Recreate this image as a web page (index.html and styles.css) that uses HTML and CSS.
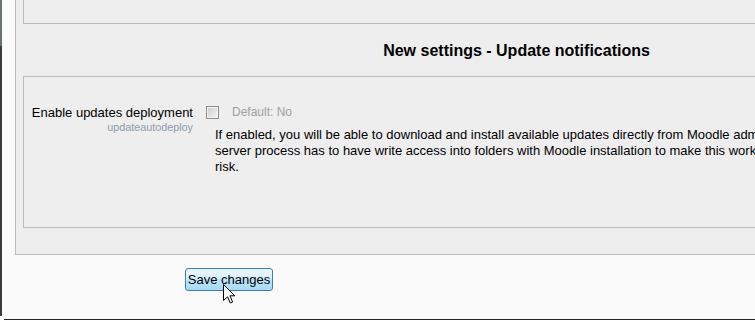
FILE: index.html
```html
<!DOCTYPE html>
<html>
<head>
<meta charset="utf-8">
<title>Update notifications</title>
<link rel="stylesheet" href="styles.css">
</head>
<body>
<div class="screen">
  <div class="main">
    <div class="edge"></div>
    <div class="page">
      <div class="outer">
        <div class="box box-prev"></div>
        <h2 class="heading">New settings - Update notifications</h2>
        <div class="box box-setting">
          <div class="row">
            <div class="label">
              <span class="title">Enable updates deployment</span>
              <span class="shortname">updateautodeploy</span>
            </div>
            <div class="setting">
              <div class="control">
                <input type="checkbox" class="check">
                <span class="default">Default: No</span>
              </div>
              <div class="desc">If enabled, you will be able to download and install available updates directly from Moodle administration page. Note that the web<br>server process has to have write access into folders with Moodle installation to make this work. That may be seen as a potential security<br>risk.</div>
            </div>
          </div>
        </div>
      </div>
      <div class="buttons">
        <button class="save" type="button">Save changes</button>
        <svg class="cursor" width="13" height="20" viewBox="0 0 13 20"><path d="M0.5 0.5 V16.5 L4.5 12.8 L7.3 19 L9.6 18 L7 11.8 H11.8 Z" fill="#fff" stroke="#000" stroke-width="1" stroke-linejoin="miter"/></svg>
      </div>
    </div>
  </div>
  <div class="taskline"></div>
</div>
</body>
</html>
```

FILE: styles.css
```css
html, body {
  margin: 0;
  padding: 0;
  width: 755px;
  height: 320px;
  overflow: hidden;
  background: #fafafa;
  font-family: "Liberation Sans", Arial, sans-serif;
  color: #000;
}

.screen {
  display: flex;
  flex-direction: column;
  width: 755px;
  height: 320px;
}

.main {
  display: flex;
  height: 319px;
  overflow: hidden;
}

.edge {
  flex: 0 0 2px;
  background: linear-gradient(#6b7370 0, #6b7370 46px, #3a3a3a 46px, #3a3a3a 316px, #fafafa 316px);
}

.page {
  padding-left: 13px;
  flex: 0 0 auto;
}

.outer {
  margin-top: -40px;
  width: 987px;
  padding: 0 7px 26px;
  border: 1px solid #bbbbbb;
  background: #eeeeee;
}

.box {
  border: 1px solid #bbbbbb;
  background: #eeeeee;
}

.box-prev {
  height: 62px;
  border-top: none;
  border-right: none;
  margin-right: -8px;
}

.heading {
  margin: 18px 0 16px;
  font-size: 16px;
  line-height: 18px;
  font-weight: bold;
  text-align: center;
}

.box-setting {
  padding-top: 27px;
  box-sizing: border-box;
  height: 152px;
  border-right: none;
  margin-right: -8px;
}

.row {
  display: flex;
}

.label {
  flex: 0 0 169px;
  display: flex;
  flex-direction: column;
  align-items: flex-end;
  text-align: right;
}

.title {
  font-size: 13px;
  line-height: 17px;
}

.shortname {
  font-size: 10.8px;
  line-height: 12px;
  color: #8b9cb0;
}

.setting {
  padding-left: 13px;
}

.control {
  display: flex;
  align-items: center;
  height: 17px;
}

.check {
  appearance: none;
  -webkit-appearance: none;
  margin: 0;
  width: 13px;
  height: 13px;
  border: 1px solid #8e8f8f;
  box-sizing: border-box;
  background: linear-gradient(135deg, #cbcbcb 0%, #e6e6e6 60%, #f6f6f6 100%);
  box-shadow: inset 0 0 0 1px #f3f3f3;
}

.default {
  margin-left: 13px;
  font-size: 12px;
  line-height: 17px;
  color: #a0a0a0;
}

.desc {
  margin-top: 6px;
  margin-left: 9px;
  font-size: 13px;
  line-height: 16px;
  white-space: nowrap;
}

.buttons {
  position: relative;
  padding: 13px 0 0 170px;
}

.save {
  width: 88px;
  height: 23px;
  margin: 0;
  padding: 0;
  border: 1px solid #3c7fb1;
  border-radius: 3px;
  background: linear-gradient(#eaf6fd 0%, #d9f0fc 50%, #bee6fd 50%, #a7d9f5 100%);
  font-family: "Liberation Sans", Arial, sans-serif;
  font-size: 13px;
  color: #000;
}

.cursor {
  position: absolute;
  left: 208px;
  top: 29px;
}

.taskline {
  height: 1px;
  margin-left: 4px;
  background: #222222;
}
```
